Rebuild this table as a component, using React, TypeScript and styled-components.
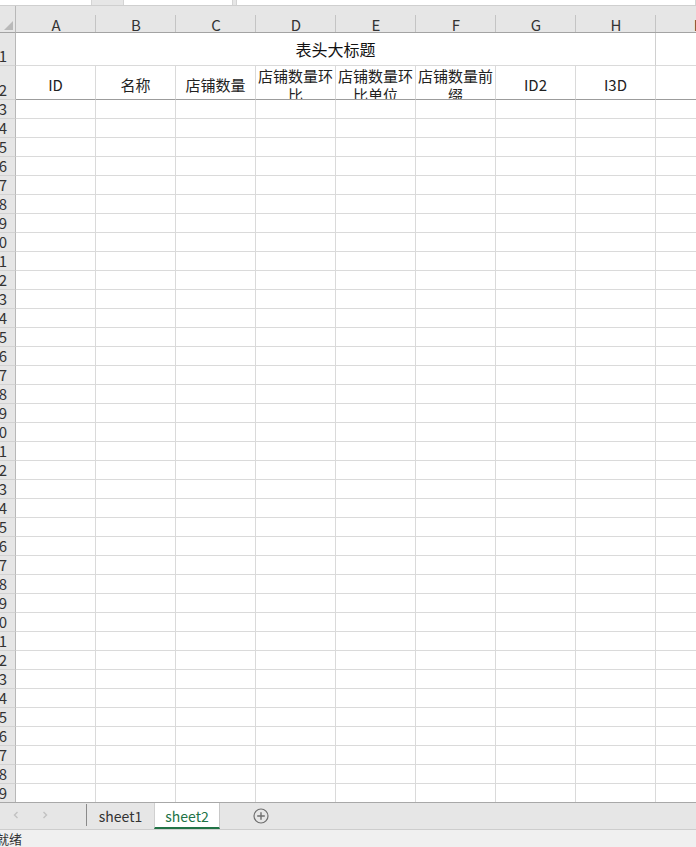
import React from "react";
import styled, { createGlobalStyle } from "styled-components";

const FONT = `"Noto Sans CJK SC", "Noto Sans", sans-serif`;

const Global = createGlobalStyle`
  html, body { margin: 0; padding: 0; background: #fff; overflow: hidden; }
  body { font-family: ${FONT}; }
  * { box-sizing: border-box; }
`;

const Window = styled.div`
  width: 696px;
  height: 847px;
  display: flex;
  flex-direction: column;
  overflow: hidden;
  background: #fff;
`;

const TopStrip = styled.div`
  flex: none;
  height: 6px;
  display: flex;
  background: #e6e6e6;
  border-bottom: 1px solid #cfcfcf;
`;

const TopBox = styled.div<{ $w: number; $ml: number }>`
  height: 5px;
  width: ${(p) => p.$w}px;
  margin-left: ${(p) => p.$ml}px;
  flex: ${(p) => (p.$w === 0 ? 1 : "none")};
  background: #fff;
  border-left: 1px solid #d4d4d4;
  border-right: 1px solid #d4d4d4;
`;

const Sheet = styled.div`
  flex: 1;
  min-height: 0;
  overflow: hidden;
  display: grid;
  grid-template-columns: 16px repeat(9, 80px);
  grid-template-rows: 27px 33px 34px repeat(37, 19px);
  border-bottom: 1px solid #a8a8a8;
  color: #222;
`;

const Corner = styled.div`
  position: relative;
  background: #e6e6e6;
  border-right: 1px solid #b8b8b8;
  border-bottom: 1px solid #a3a3a3;
  &::after {
    content: "";
    position: absolute;
    right: 2px;
    bottom: 2px;
    width: 0;
    height: 0;
    border-left: 9px solid transparent;
    border-bottom: 9px solid #b9b9b9;
  }
`;

const ColHead = styled.div`
  position: relative;
  background: #e6e6e6;
  border-bottom: 1px solid #a3a3a3;
  display: flex;
  align-items: flex-end;
  justify-content: center;
  padding-bottom: 0;
  font-size: 15px;
  line-height: 14px;
  color: #333;
  &::after {
    content: "";
    position: absolute;
    right: 0;
    top: 9px;
    bottom: 0;
    width: 1px;
    background: #c4c4c4;
  }
`;

const RowHead = styled.div`
  background: #e6e6e6;
  border-right: 1px solid #b8b8b8;
  border-bottom: 1px solid #d2d2d2;
  display: flex;
  align-items: flex-end;
  justify-content: flex-end;
  padding-right: 8px;
  font-size: 15px;
  line-height: 18px;
  color: #333;
  overflow: hidden;
  white-space: nowrap;
`;

const Cell = styled.div`
  border-right: 1px solid #dadada;
  border-bottom: 1px solid #dadada;
`;

const TitleCell = styled.div`
  grid-column: span 8;
  border-right: 1px solid #d0d0d0;
  border-bottom: 1px solid #dadada;
  display: flex;
  align-items: center;
  justify-content: center;
  font-size: 16px;
  color: #111;
`;

const HeadCell = styled.div<{ $wrap?: boolean }>`
  border-right: 1px solid #dadada;
  border-bottom: 1px solid #9c9c9c;
  overflow: hidden;
  display: flex;
  justify-content: center;
  align-items: ${(p) => (p.$wrap ? "flex-start" : "center")};
  padding: ${(p) => (p.$wrap ? "0 1px" : "4px 1px 0")};
  font-size: 15px;
  line-height: 19px;
  text-align: center;
  color: #222;
  word-break: break-all;
`;

const EdgeCell = styled(Cell)<{ $dark?: boolean }>`
  border-bottom-color: ${(p) => (p.$dark ? "#9c9c9c" : "#dadada")};
`;

const TabBar = styled.div`
  flex: none;
  height: 27px;
  display: flex;
  align-items: stretch;
  background: #e6e6e6;
  border-bottom: 1px solid #cdcdcd;
`;

const NavArrows = styled.div`
  width: 87px;
  display: flex;
  align-items: center;
  gap: 21px;
  padding-left: 12px;
  border-right: 1px solid #8a8a8a;
  margin: 1px 0 3px;
`;

const Tab = styled.div<{ $active?: boolean }>`
  width: ${(p) => (p.$active ? 66 : 67)}px;
  display: flex;
  align-items: center;
  justify-content: center;
  font-size: 14px;
  color: ${(p) => (p.$active ? "#217346" : "#333")};
  background: ${(p) => (p.$active ? "#fff" : "transparent")};
  border-left: ${(p) => (p.$active ? "1px solid #d0d0d0" : "none")};
  border-right: ${(p) => (p.$active ? "1px solid #c8c8c8" : "none")};
  border-bottom: 2px solid ${(p) => (p.$active ? "#217346" : "transparent")};
  padding-top: 1px;
`;

const AddButton = styled.div`
  margin-left: 33px;
  display: flex;
  align-items: center;
`;

const StatusBar = styled.div`
  flex: none;
  height: 17px;
  background: #f0f0f0;
  font-size: 13px;
  line-height: 18px;
  color: #333;
  overflow: hidden;
`;

const StatusText = styled.span`
  display: inline-block;
  margin-left: -4px;
`;

const Chevron = ({ dir }: { dir: "l" | "r" }) => (
  <svg width="8" height="10" viewBox="0 0 8 10">
    <path
      d={dir === "l" ? "M5.5 2 L2.5 5 L5.5 8" : "M2.5 2 L5.5 5 L2.5 8"}
      fill="none"
      stroke="#c2c2c2"
      strokeWidth="1.4"
    />
  </svg>
);

const PlusCircle = () => (
  <svg width="16" height="16" viewBox="0 0 16 16">
    <circle cx="8" cy="8" r="7" fill="none" stroke="#6e6e6e" strokeWidth="1.2" />
    <path d="M8 4.2 V11.8 M4.2 8 H11.8" stroke="#6e6e6e" strokeWidth="1.4" />
  </svg>
);

const letters = ["A", "B", "C", "D", "E", "F", "G", "H", "I"];
const headers: { t: string; wrap?: boolean }[] = [
  { t: "ID" },
  { t: "名称" },
  { t: "店铺数量" },
  { t: "店铺数量环比", wrap: true },
  { t: "店铺数量环比单位", wrap: true },
  { t: "店铺数量前缀", wrap: true },
  { t: "ID2" },
  { t: "I3D" },
];

export default function App() {
  const bodyRows = Array.from({ length: 37 }, (_, i) => i + 3);
  return (
    <>
      <Global />
      <Window>
        <TopStrip>
          <TopBox $w={93} $ml={-1} />
          <TopBox $w={110} $ml={31} />
          <TopBox $w={0} $ml={3} />
        </TopStrip>
        <Sheet>
          <Corner />
          {letters.map((l) => (
            <ColHead key={l}>{l}</ColHead>
          ))}

          <RowHead>1</RowHead>
          <TitleCell>表头大标题</TitleCell>
          <EdgeCell />

          <RowHead>2</RowHead>
          {headers.map((h) => (
            <HeadCell key={h.t} $wrap={h.wrap}>
              {h.t}
            </HeadCell>
          ))}
          <EdgeCell $dark />

          {bodyRows.map((r) => (
            <React.Fragment key={r}>
              <RowHead>{r}</RowHead>
              {letters.map((l) => (
                <Cell key={l} />
              ))}
            </React.Fragment>
          ))}
        </Sheet>
        <TabBar>
          <NavArrows>
            <Chevron dir="l" />
            <Chevron dir="r" />
          </NavArrows>
          <Tab>sheet1</Tab>
          <Tab $active>sheet2</Tab>
          <AddButton>
            <PlusCircle />
          </AddButton>
        </TabBar>
        <StatusBar>
          <StatusText>就绪</StatusText>
        </StatusBar>
      </Window>
    </>
  );
}
